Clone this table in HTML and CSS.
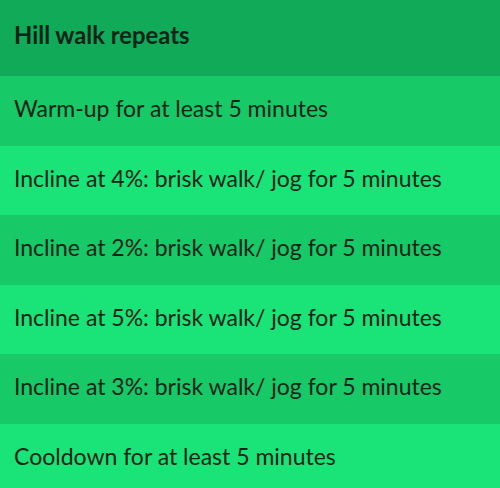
FILE: index.html
```html
<!DOCTYPE html>
<html>
<head>
<meta charset="utf-8">
<link rel="stylesheet" href="styles.css">
</head>
<body>
<div class="list">
  <div class="item header">Hill walk repeats</div>
  <div class="item dark">Warm-up for at least 5 minutes</div>
  <div class="item light">Incline at 4%: brisk walk/ jog for 5 minutes</div>
  <div class="item dark">Incline at 2%: brisk walk/ jog for 5 minutes</div>
  <div class="item light">Incline at 5%: brisk walk/ jog for 5 minutes</div>
  <div class="item dark">Incline at 3%: brisk walk/ jog for 5 minutes</div>
  <div class="item light">Cooldown for at least 5 minutes</div>
</div>
</body>
</html>
```
FILE: styles.css
```css
html, body {
  margin: 0;
  padding: 0;
  background: #1ae478;
}
.list {
  display: flex;
  flex-direction: column;
  font-family: Lato, "Noto Sans", sans-serif;
  color: #0c2418;
}
.item {
  font-size: 23px;
  line-height: 27.6px;
  padding: 19.2px 14px 22.8px;
}
.header {
  font-weight: bold;
  font-size: 23.8px;
  line-height: 27.6px;
  padding-top: 22.4px;
  padding-bottom: 26px;
  background: #10aa58;
}
.dark {
  background: #18c968;
}
.light {
  background: #1ae478;
}
```
